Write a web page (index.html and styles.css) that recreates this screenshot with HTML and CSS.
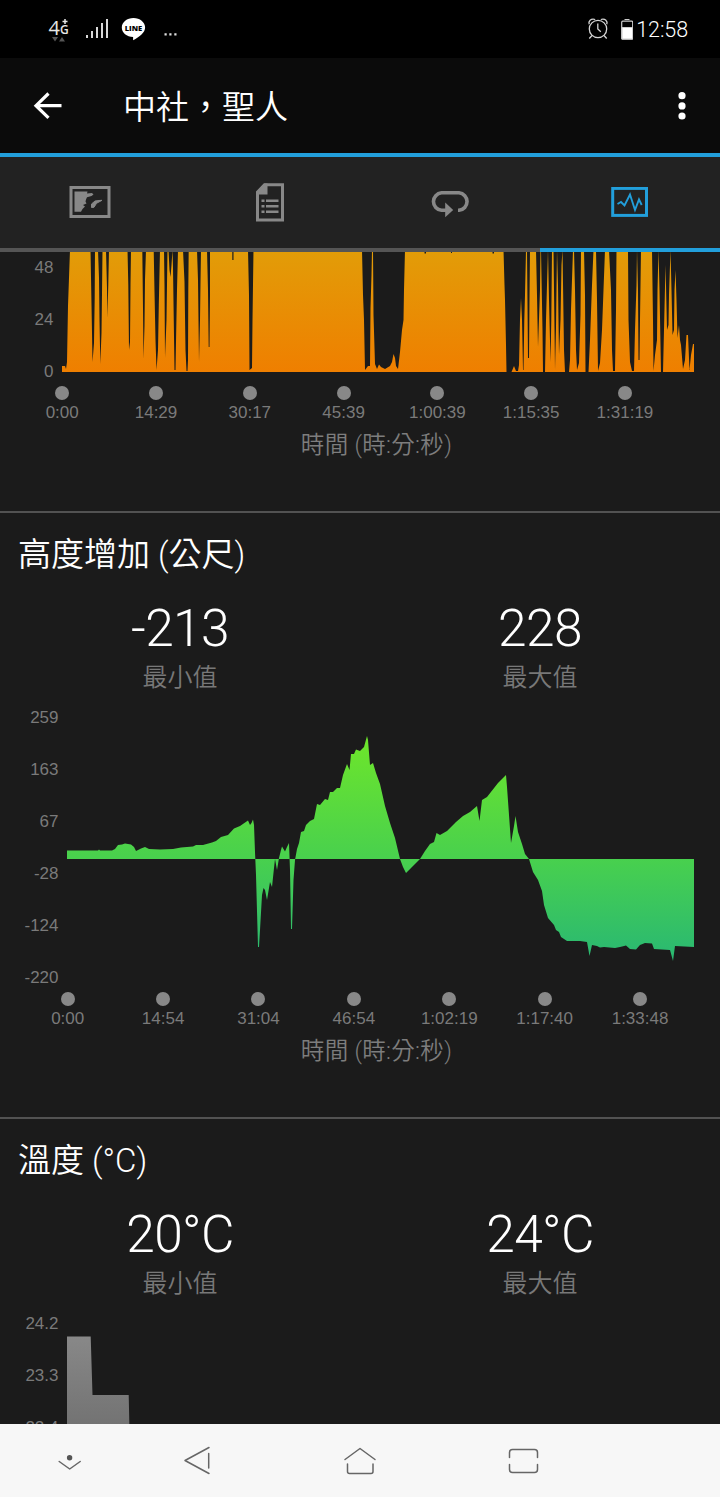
FILE: index.html
```html
<!DOCTYPE html>
<html lang="zh-TW">
<head>
    <meta charset="UTF-8">
    <meta name="viewport" content="width=device-width, initial-scale=1.0">
    <title>中社，聖人</title>
    <link rel="stylesheet" href="styles.css">
</head>
<body>
    <div class="status-bar">
        <svg class="status-left" width="190" height="58" viewBox="0 0 190 58">
            <text x="48.500" y="35" class="net-big">4</text>
            <text x="60" y="34" class="net-small">G</text>
            <path d="M62.500 21.500h5M65 19v5" stroke="#e6e6e6" stroke-width="1.500"/>
            <path d="M52 37h6l-3 4.500zM59 41.500h6l-3-4.500z" fill="#555"/>
            <path d="M87 38v-3M92 38v-7M97 38v-11M102 38v-15M107 38v-19" stroke="#d8d8d8" stroke-width="2"/>
            <path d="M133.500 18c6.400 0 11.600 4.200 11.600 9.500 0 5-5.500 9.500-12 12.700v-3.300c-6.400 0-11.300-4.200-11.300-9.400 0-5.300 5.200-9.500 11.700-9.500z" fill="#fff"/>
            <text x="133.500" y="30.700" class="line-text">LINE</text>
            <path d="M164.500 33.200h2.200v2.200h-2.200zM169.300 33.200h2.200v2.200h-2.200zM174.300 33.200h2.200v2.200h-2.200z" fill="#ddd"/>
        </svg>
        <div class="status-right">
            <svg width="46" height="30" viewBox="588 14 46 30">
                <g fill="none" stroke="#d4d4d4" stroke-width="1.300">
                    <circle cx="599" cy="29" r="8.700"/>
                    <path d="M598.800 23.500v5.500l3 2.700M593 35.500l-2.700 3M605 35.500l2.700 3"/>
                    <path d="M590.200 24.200c-1-3 1.500-6 6-4.700M607.800 24.200c1-3-1.500-6-6-4.700"/>
                </g>
                <rect x="622.700" y="21.200" width="11" height="18" rx="1" fill="none" stroke="#ccc" stroke-width="1.200"/>
                <path d="M625.500 19.500h5M623 27.500h10.500v11.500h-10.500z" fill="#fff" stroke="#ccc"/>
            </svg>
            <span class="clock">12:58</span>
        </div>
    </div>

    <div class="app-bar">
        <svg width="30" height="30" viewBox="33 91 30 30">
            <path d="M61.500 105.700H36M48.500 93.500L36 105.700l12.500 12.200" fill="none" stroke="#fff" stroke-width="3.200"/>
        </svg>
        <h1>中社，聖人</h1>
        <svg class="more" width="10" height="30" viewBox="0 0 10 30">
            <circle cx="5" cy="4.700" r="3.600"/>
            <circle cx="5" cy="14.900" r="3.600"/>
            <circle cx="5" cy="25" r="3.600"/>
        </svg>
    </div>

    <div class="tabs">
        <div class="tab">
            <svg width="42" height="34" viewBox="69.500 186 42 34">
                <rect x="71.500" y="187.500" width="38" height="29" fill="none" stroke="#888" stroke-width="3"/>
                <path d="M75 191.500h13l-.5 2 5-.5 1.500 1.500-2 1.500-4.500 1.200-1 2.300-.5 2 1 2-3.500 1.500 2 1.500-2.500 2.500-1.500 2.800H75z" fill="#888"/>
                <path d="M102.500 200.300l-5.500 3-2.500 4-2.500.2 0-3.500 3.500-3 4-.5z" fill="#888" stroke="#888" stroke-linejoin="round"/>
            </svg>
        </div>
        <div class="tab">
            <svg width="30" height="40" viewBox="255 182.500 30 40">
                <path d="M264.500 184.300h18v35.200h-25v-28z" fill="none" stroke="#888" stroke-width="3"/>
                <path d="M256.500 194v-2.500l8-8.500h3v11z" fill="#888"/>
                <path d="M266 200.300h12.500M266 205.800h12.500M266 211.300h12.500" stroke="#888" stroke-width="2.600"/>
                <path d="M261.500 200.300h3M261.500 205.800h3M261.500 211.300h3" stroke="#888" stroke-width="2.600"/>
            </svg>
        </div>
        <div class="tab">
            <svg width="40" height="30" viewBox="430 189 40 30">
                <path d="M446 211.300H441.500a9 8.800 0 0 1 0-17.500H459a9 8.800 0 0 1 0 17.500h-1" fill="none" stroke="#888" stroke-width="3.600"/>
                <path d="M445.200 203.500l8 7.500-8 7.300z" fill="#888"/>
            </svg>
        </div>
        <div class="tab active">
            <svg width="38" height="32" viewBox="611 187 38 32">
                <rect x="612.700" y="188.400" width="33.800" height="27" fill="none" stroke="#229fdb" stroke-width="3"/>
                <path d="M617.500 204l3.500-2 3.500 3.500 5.500-11 5 15.500 4-10.500 2.700 5.500" fill="none" stroke="#229fdb" stroke-width="1.900"/>
            </svg>
        </div>
    </div>

    <div class="content">
        <section class="card card-scrolled">
            <div class="chart chart-wide">
                <div class="y-axis">
                    <span>48</span>
                    <span>24</span>
                    <span>0</span>
                </div>
                <svg width="632" height="156" viewBox="62 242 632 156">
                    <defs>
                        <linearGradient id="orange" gradientUnits="userSpaceOnUse" x1="0" y1="252" x2="0" y2="372">
                            <stop offset="0" stop-color="#e29c08"/>
                            <stop offset="1" stop-color="#ef7f00"/>
                        </linearGradient>
                    </defs>
                    <path fill="url(#orange)" d="M62 372V366H65L66 369 67 362 68 306 70 250H90.500L91 277 92 333 92.500 362 94 343 94.700 298 95 250H98L99 278 99.500 320 100.300 364 101.500 333 102 293 102.500 250H106L107 288 107.400 318 108.300 284 109 250H127.500L128.300 285 129 350 130 342 130.500 285 131 250H142.300L143 308 143.500 359 144.500 326 145 280 146 250H153.700L154.500 292 155.500 340 156.500 370 158 350 158.800 305 160 250H164L164.500 285 165 358 166.500 320 167 285 167.500 250H168.500L169.500 270 170.500 277 171.500 265 172.500 250 173 268 173.500 303 174.500 370H175.500L176 342 177 290 178 250H183L184.500 282 185.500 350 186.500 371H187.500L188 360 188.300 290 188.700 250H197L198 280 199 362 200 320 200.500 282 201 250H207L208 290 208.700 347H209.500L210 295V250H232.300V260H233.500V250H248L249 295 249.500 370 252 368 252.500 320 253 285 253.500 250H362L363 295 364 320 365 370 368 366H370L370.500 308 371.500 275 372 250H373L373.500 315 375 364 377 369 379 364.500 381 367 385 369 390 366 392 362 393.500 354 395 358 396 366 398 369 400 352 402 330 403.500 320 404 290 405 250H424.500V253.500H426V250H451V253H452V250H492.500V253.500H494V250H503.500L504.500 285 505 300 506 345 506.500 372H511.500L514 366 516 371H518L519 365 520 320 521 298 522 320 523 370H523.500L524.300 320 525 295 526 250H527L528 358H529L529.500 300 530 250H536L537 295 538 347 540 290 540.500 250H541L542.500 330 543 372H545L546 320 547 285 548 250 549 300 550.500 362 551.300 320 552 250H553.500L554.500 328 555 370 556 328 557 250 558 285 559 355 560.500 320 561.500 265 562.500 250 564 350 565 372H569L570 360 571 310 573 250H574L575 290 576 350 577 370 579 363 580.500 315 581 250H584L585 295 585.500 372H588.500L590 340 592 285 593.500 250H596L597 300 598 371 600 363 602 330 603.500 290 605 250H609L611 290 612 350 613 371H615L616 310 616.500 250H628L628.500 320 630 362 632 371H634L635 330 636.500 285 637 250 638 290 638.500 360H639.500L640 320 641 250H652L653 320 653.500 371 655 355 657 340 657.500 290 658.500 250 659.500 290 661 372H663L664 330 665.500 265 666 285 667 330 668.500 325 669 295 670.500 250 671.500 290 672.500 335 674 330 674.500 290 675.500 270 676.500 300 677.500 338 679 325 680 340 681 345 683 369 685 360 686.500 335 688 335 689.500 370 691 355 693 344H694V372z"/>
                </svg>
            </div>
            <div class="x-axis x-axis-wide">
                <span>0:00</span>
                <span>14:29</span>
                <span>30:17</span>
                <span>45:39</span>
                <span>1:00:39</span>
                <span>1:15:35</span>
                <span>1:31:19</span>
            </div>
            <p class="axis-title">時間 (時:分:秒)</p>
        </section>

        <section class="card">
            <h2>高度增加 (公尺)</h2>
            <div class="stats">
                <div class="stat">
                    <div class="value">-213</div>
                    <div class="label">最小值</div>
                </div>
                <div class="stat">
                    <div class="value">228</div>
                    <div class="label">最大值</div>
                </div>
            </div>
            <div class="chart">
                <div class="y-axis">
                    <span>259</span>
                    <span>163</span>
                    <span>67</span>
                    <span>-28</span>
                    <span>-124</span>
                    <span>-220</span>
                </div>
                <svg width="627" height="312" viewBox="67 692 627 312">
                    <defs>
                        <linearGradient id="green" gradientUnits="userSpaceOnUse" x1="0" y1="736" x2="0" y2="961">
                            <stop offset="0" stop-color="#6ee62a"/>
                            <stop offset=".55" stop-color="#48d04e"/>
                            <stop offset="1" stop-color="#29b873"/>
                        </linearGradient>
                    </defs>
                    <path fill="url(#green)" d="M67 859V850.500H98L99 849.500 100 850.500H112L115 849 118 845 122 844.500 125 843.500 131 844.500 134 847 136 851 141 848.500 145 847 149 849 160 849.500 173 849 181 847.500 193 846.500 196 845H203L212 842.500 216 841 221 837 228 835 234 828.500 240 826 248 820.500 250 825 251.500 823 253 819.500 254 825 255 852 256 875 258 947H259L260 930 262 895 263.500 888 265 890 267 900 270 882 272 887 274 868 275 859 277 870 279 858 281 850 282 846.500 285 851.500 287 847 289 843 290 870 291 929H292L293.500 880 295 860 297 849 299 843 301 832 304 831 306 825 310 821 314 819 317 804 320 805 325 799 328 800 330 792H333L337 788 340 788 343 775 347 764 349.500 770 351 754H354L356 749.500 360 751 364 747 367 736 368 740 370 765 373 763 376 773 380 784 385 806 390 823 395 838 400 859 403 867 406 873 412 867 420 859 425 851 430 844 434 842 436.500 833 440 835 447 831 456 822 463 816 470 812 477 806 479.500 821 482 800 487 797 498 783 506 775 507 787 511 843 514 826 515.500 816 518 832 522 844 525 854 529 859 533 872 538 880 542 891 544 905 548 918 554 925 556 930 559 932 561 937 567 941H580L587 942 589.500 956 592 945 597 946 600 947.500 604 947 615 948 620 947 626 945.500 630 949 636 949.500 640 945 645 943 652 943.500 654 949 670 950 673 961 675 946 694 947V859z"/>
                </svg>
            </div>
            <div class="x-axis">
                <span>0:00</span>
                <span>14:54</span>
                <span>31:04</span>
                <span>46:54</span>
                <span>1:02:19</span>
                <span>1:17:40</span>
                <span>1:33:48</span>
            </div>
            <p class="axis-title">時間 (時:分:秒)</p>
        </section>

        <section class="card">
            <h2>溫度 (°C)</h2>
            <div class="stats">
                <div class="stat">
                    <div class="value">20°C</div>
                    <div class="label">最小值</div>
                </div>
                <div class="stat">
                    <div class="value">24°C</div>
                    <div class="label">最大值</div>
                </div>
            </div>
            <div class="chart">
                <div class="y-axis">
                    <span>24.2</span>
                    <span>23.3</span>
                    <span>22.4</span>
                </div>
                <svg width="627" height="156" viewBox="67 1298 627 156">
                    <defs>
                        <linearGradient id="grey" x1="0" y1="0" x2="0" y2="1">
                            <stop offset="0" stop-color="#888"/>
                            <stop offset="1" stop-color="#6c6c6c"/>
                        </linearGradient>
                    </defs>
                    <path fill="url(#grey)" d="M67 1454V1336.500H90.700L92.500 1395H128.700L130 1454z"/>
                </svg>
            </div>
        </section>
    </div>

    <div class="nav-bar">
        <svg width="720" height="73" viewBox="0 1424 720 73">
            <g fill="none" stroke="#666" stroke-width="1.500" stroke-linecap="round" stroke-linejoin="round">
                <path d="M59.200 1461.500l10.500 7.500 10.500-7.500"/>
                <path d="M209 1447.500l-24 13 24 13M208.700 1453.500v14.500"/>
                <path d="M345 1459.500l15-11 15 11M347.500 1464v7.500q0 2 2 2h21.500q2 0 2-2v-7.500"/>
                <path d="M509.500 1457.500v-5q0-3 3-3h22q3 0 3 3v5M509.500 1464.500v5q0 3 3 3h22q3 0 3-3v-5"/>
            </g>
            <circle cx="69.600" cy="1457.700" r="2.700" fill="#555"/>
        </svg>
    </div>
</body>
</html>
```
FILE: styles.css
```css
*{
    margin: 0;
    padding: 0;
    box-sizing: border-box;
}

body{
    width: 720px;
    height: 1497px;
    overflow: hidden;
    display: flex;
    flex-direction: column;
    background-color: #1b1b1b;
    color: white;
    font-family: Roboto, "Noto Sans CJK TC", sans-serif;
}

svg{
    display: block;
}

.status-bar{
    height: 58px;
    display: flex;
    justify-content: space-between;
    background-color: black;
}

.net-big{
    font-family: "Open Sans", sans-serif;
    font-size: 20px;
    fill: #e6e6e6;
}

.net-small{
    font-family: "Open Sans", sans-serif;
    font-size: 12px;
    font-weight: 600;
    fill: #e6e6e6;
}

.line-text{
    font-family: "Open Sans", sans-serif;
    font-size: 7.6px;
    font-weight: 800;
    text-anchor: middle;
    fill: black;
}

.status-right{
    display: flex;
    align-items: center;
    padding-right: 32px;
    gap: 3px;
}

.clock{
    padding-top: 1px;
    font-size: 21.5px;
    font-weight: 350;
    letter-spacing: -0.1px;
    line-height: 30px;
}

.app-bar{
    height: 95px;
    display: flex;
    align-items: center;
    padding: 0 33px;
    background-color: #0b0b0b;
}

.app-bar h1{
    margin-left: 60px;
    padding-top: 5px;
    font-size: 33px;
    font-weight: 350;
    line-height: 48px;
}

.more{
    margin-left: auto;
    fill: white;
}

.tabs{
    height: 99px;
    display: flex;
    border-top: 4px solid #229fdb;
    background-color: #222;
}

.tab{
    flex: 1;
    display: flex;
    justify-content: center;
    align-items: center;
    border-bottom: 4px solid #555;
}

.tab.active{
    border-bottom-color: #229fdb;
}

.content{
    height: 1172px;
    overflow: hidden;
}

.card{
    height: 606px;
    padding-top: 18px;
    border-bottom: 2px solid #525252;
}

.card-scrolled{
    height: 271px;
    margin-top: -10px;
    padding-top: 0;
}

.card h2{
    padding-left: 18px;
    font-size: 33px;
    font-weight: 350;
    line-height: 48px;
}

.stats{
    height: 113px;
    padding-top: 20px;
    display: flex;
}

.stat{
    flex: 1;
    text-align: center;
}

.value{
    font-size: 51.5px;
    font-weight: 300;
    letter-spacing: -0.6px;
    line-height: 60px;
}

.label{
    padding-top: 1px;
    font-size: 25px;
    font-weight: 350;
    line-height: 36px;
    color: #787878;
}

.chart{
    display: grid;
    grid-template-columns: 67px 627px;
}

.chart-wide{
    grid-template-columns: 62px 632px;
}

.y-axis{
    padding-right: 8.5px;
    display: flex;
    flex-direction: column;
    text-align: right;
    font-family: "Liberation Sans", sans-serif;
    font-size: 17px;
    line-height: 52px;
    color: #7a7a7a;
}

.x-axis{
    margin-top: -12px;
    margin-left: 20px;
    display: grid;
    grid-template-columns: repeat(7, 95.4px);
    text-align: center;
    font-family: "Liberation Sans", sans-serif;
    font-size: 17px;
    line-height: 24px;
    color: #7a7a7a;
}

.x-axis-wide{
    margin-left: 15.3px;
    grid-template-columns: repeat(7, 93.8px);
}

/* round marker over each time label */
.x-axis span::before{
    content: "";
    display: block;
    width: 14px;
    height: 14px;
    margin: 0 auto 1px;
    border-radius: 50%;
    background-color: #888;
}

.axis-title{
    margin-left: 33px;
    padding-top: 2px;
    text-align: center;
    font-size: 23.5px;
    font-weight: 350;
    letter-spacing: 0.3px;
    line-height: 36px;
    color: #7d7d7d;
}

.nav-bar{
    height: 73px;
    background-color: #f7f7f7;
}
```
